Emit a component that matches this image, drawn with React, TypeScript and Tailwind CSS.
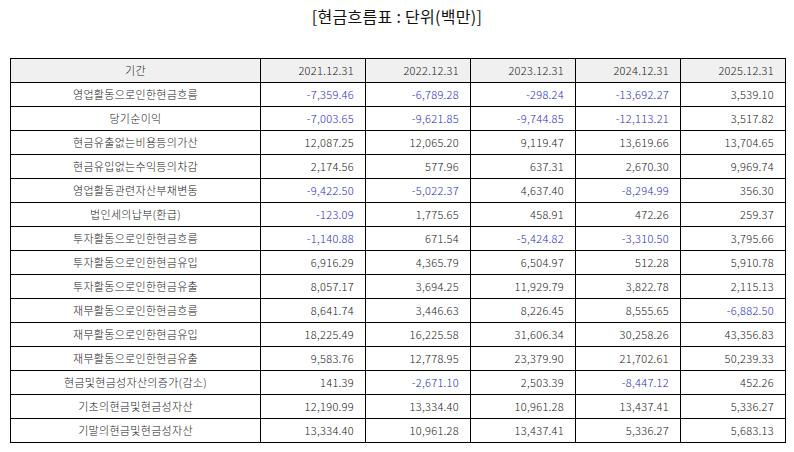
const years = ["2021.12.31", "2022.12.31", "2023.12.31", "2024.12.31", "2025.12.31"];

const rows: [string, string[]][] = [
  ["영업활동으로인한현금흐름", ["-7,359.46", "-6,789.28", "-298.24", "-13,692.27", "3,539.10"]],
  ["당기순이익", ["-7,003.65", "-9,621.85", "-9,744.85", "-12,113.21", "3,517.82"]],
  ["현금유출없는비용등의가산", ["12,087.25", "12,065.20", "9,119.47", "13,619.66", "13,704.65"]],
  ["현금유입없는수익등의차감", ["2,174.56", "577.96", "637.31", "2,670.30", "9,969.74"]],
  ["영업활동관련자산부채변동", ["-9,422.50", "-5,022.37", "4,637.40", "-8,294.99", "356.30"]],
  ["법인세의납부(환급)", ["-123.09", "1,775.65", "458.91", "472.26", "259.37"]],
  ["투자활동으로인한현금흐름", ["-1,140.88", "671.54", "-5,424.82", "-3,310.50", "3,795.66"]],
  ["투자활동으로인한현금유입", ["6,916.29", "4,365.79", "6,504.97", "512.28", "5,910.78"]],
  ["투자활동으로인한현금유출", ["8,057.17", "3,694.25", "11,929.79", "3,822.78", "2,115.13"]],
  ["재무활동으로인한현금흐름", ["8,641.74", "3,446.63", "8,226.45", "8,555.65", "-6,882.50"]],
  ["재무활동으로인한현금유입", ["18,225.49", "16,225.58", "31,606.34", "30,258.26", "43,356.83"]],
  ["재무활동으로인한현금유출", ["9,583.76", "12,778.95", "23,379.90", "21,702.61", "50,239.33"]],
  ["현금및현금성자산의증가(감소)", ["141.39", "-2,671.10", "2,503.39", "-8,447.12", "452.26"]],
  ["기초의현금및현금성자산", ["12,190.99", "13,334.40", "10,961.28", "13,437.41", "5,336.27"]],
  ["기말의현금및현금성자산", ["13,334.40", "10,961.28", "13,437.41", "5,336.27", "5,683.13"]],
];

const App = () => {
  return (
    <div
      className="w-[794px] h-[452px] bg-white text-[#222]"
      style={{ fontFamily: '"Noto Sans CJK KR", "Noto Sans", sans-serif' }}
    >
      <h1 className="h-[58px] pt-[4px] text-center text-[16px] leading-[24px] text-[#111] tracking-[0.3px]">
        [현금흐름표 : 단위(백만)]
      </h1>
      <table className="ml-[10px] w-[775px] border-collapse table-fixed text-[11px] font-light tracking-[0.3px]">
        <colgroup>
          <col className="w-[250px]" />
          {years.map((y) => (
            <col key={y} className="w-[105px]" />
          ))}
        </colgroup>
        <thead>
          <tr className="h-[24px] bg-[#f0f0f0]">
            <th className="border border-black font-light text-center">기간</th>
            {years.map((y) => (
              <th key={y} className="border border-black font-light text-right pr-[11px]">
                {y}
              </th>
            ))}
          </tr>
        </thead>
        <tbody>
          {rows.map(([label, vals]) => (
            <tr key={label} className="h-[24px]">
              <td className="border border-black text-center">{label}</td>
              {vals.map((v, i) => (
                <td
                  key={i}
                  className={`border border-black text-right pr-[11px] ${
                    v.startsWith("-") ? "text-[#2a2ad0]" : ""
                  }`}
                >
                  {v}
                </td>
              ))}
            </tr>
          ))}
        </tbody>
      </table>
    </div>
  );
};

export default App;
